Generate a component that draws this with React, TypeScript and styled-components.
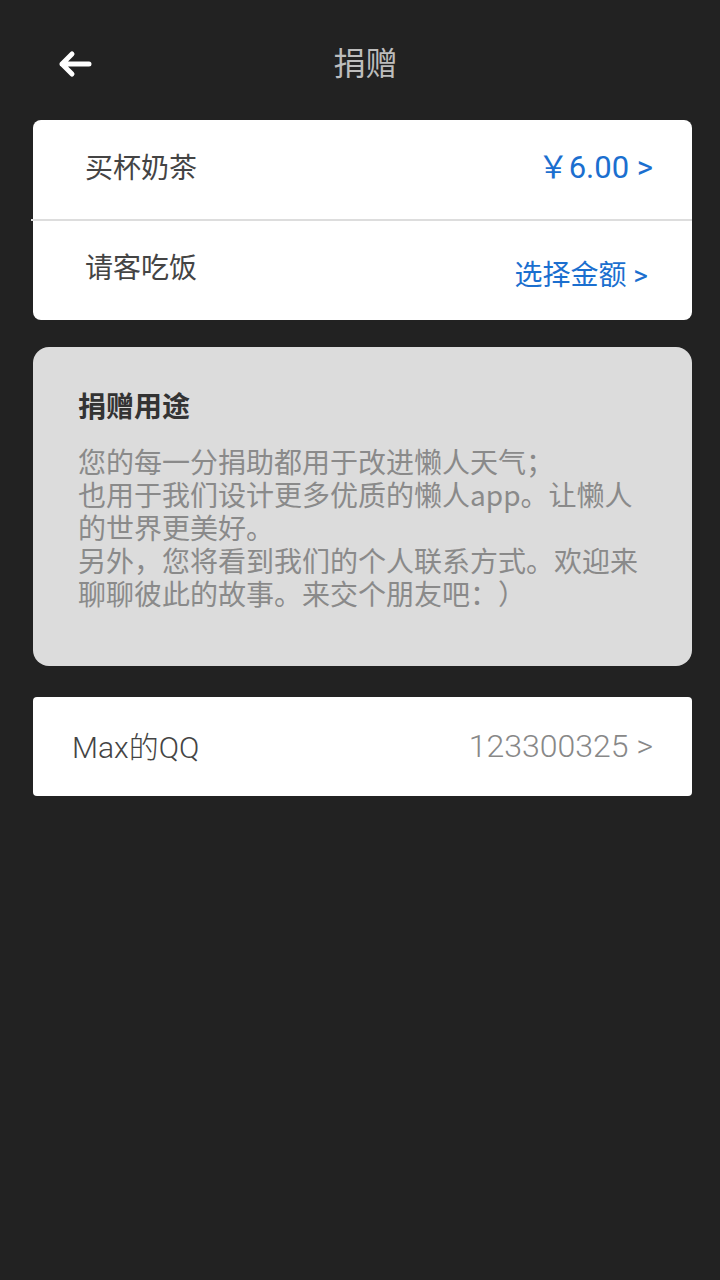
import React from "react";
import styled, { createGlobalStyle } from "styled-components";

const Global = createGlobalStyle`
  html, body { margin: 0; padding: 0; background: #222222; }
  body { font-family: Roboto, "Noto Sans CJK SC", sans-serif; text-spacing-trim: space-all; }
  * { box-sizing: border-box; }
`;

const Page = styled.div`
  width: 720px;
  min-height: 1280px;
  background: #222222;
  display: flex;
  flex-direction: column;
  padding: 0 28px 0 33px;
`;

const Header = styled.div`
  height: 120px;
  display: flex;
  align-items: center;
  position: relative;
  padding-top: 8px;
`;

const BackButton = styled.div`
  width: 40px;
  height: 40px;
  margin-left: 22px;
  display: flex;
  align-items: center;
  justify-content: center;
`;

const Title = styled.div`
  position: absolute;
  left: 0;
  right: 0;
  top: 37px;
  padding-left: 6px;
  text-align: center;
  font-family: "Noto Sans CJK SC", sans-serif;
  font-size: 32px;
  line-height: 48px;
  color: #bdbdbd;
  pointer-events: none;
`;

const Card = styled.div<{ $radius: number }>`
  background: #ffffff;
  border-radius: ${(p) => p.$radius}px;
  display: flex;
  flex-direction: column;
`;

const Row = styled.div<{ $padL: number; $padR: number }>`
  height: 99px;
  display: flex;
  align-items: center;
  justify-content: space-between;
  padding: 0 ${(p) => p.$padR}px 0 ${(p) => p.$padL}px;
`;

const Divider = styled.div`
  height: 2px;
  background: #dddddd;
  margin-left: -2px;
`;

const Label = styled.span<{ $size: number; $shift?: number; $light?: boolean }>`
  font-family: ${(p) => (p.$light ? 'Roboto, "Noto Sans CJK SC", sans-serif' : '"Noto Sans CJK SC", sans-serif')};
  font-weight: ${(p) => (p.$light ? 300 : 400)};
  font-size: ${(p) => p.$size}px;
  color: #444444;
  transform: translateY(${(p) => p.$shift ?? 0}px);
`;

const Value = styled.span<{ $size: number; $color: string; $shift?: number; $light?: boolean }>`
  font-family: Roboto, "Noto Sans CJK SC", sans-serif;
  font-weight: ${(p) => (p.$light ? 300 : 400)};
  font-size: ${(p) => p.$size}px;
  color: ${(p) => p.$color};
  transform: translateY(${(p) => p.$shift ?? 0}px);
  white-space: pre;
`;

const InfoCard = styled.div`
  margin-top: 27px;
  background: #dcdcdc;
  border-radius: 16px;
  padding: 38px 45px 52px 45px;
  display: flex;
  flex-direction: column;
  gap: 20px;
  min-height: 319px;
`;

const InfoTitle = styled.div`
  font-family: "Noto Sans CJK SC", sans-serif;
  font-weight: 700;
  font-size: 28px;
  line-height: 40px;
  color: #333333;
`;

const InfoBody = styled.div`
  font-family: "Noto Sans CJK SC", sans-serif;
  font-size: 28px;
  line-height: 33px;
  color: #8a8a8a;
  white-space: pre-wrap;
  word-break: break-all;
  text-spacing-trim: space-all;
`;

const Spacer = styled.div<{ $h: number }>`
  height: ${(p) => p.$h}px;
`;

const BackArrow = () => (
  <svg width="36" height="30" viewBox="0 0 36 30">
    <path
      d="M5 15 H32 M15 5 L5 15 L15 25"
      fill="none"
      stroke="#ffffff"
      strokeWidth="5"
      strokeLinecap="round"
      strokeLinejoin="round"
    />
  </svg>
);

export default function App() {
  return (
    <>
      <Global />
      <Page>
        <Header>
          <BackButton>
            <BackArrow />
          </BackButton>
          <Title>捐赠</Title>
        </Header>
        <Card $radius={8}>
          <Row $padL={52} $padR={39}>
            <Label $size={28} $shift={-4}>买杯奶茶</Label>
            <Value $size={31} $color="#1b6fcf" $shift={-5}>￥6.00 &gt;</Value>
          </Row>
          <Divider />
          <Row $padL={52} $padR={44}>
            <Label $size={28} $shift={-5}>请客吃饭</Label>
            <Value $size={28} $color="#1b6fcf" $shift={2}>选择金额 &gt;</Value>
          </Row>
        </Card>
        <InfoCard>
          <InfoTitle>捐赠用途</InfoTitle>
          <InfoBody>
            {"您的每一分捐助都用于改进懒人天气；\n也用于我们设计更多优质的懒人app。让懒人的世界更美好。\n另外，您将看到我们的个人联系方式。欢迎来聊聊彼此的故事。来交个朋友吧：）"}
          </InfoBody>
        </InfoCard>
        <Spacer $h={31} />
        <Card $radius={4}>
          <Row $padL={39} $padR={39}>
            <Label $size={30} $light $shift={-2}>Max的QQ</Label>
            <Value $size={32} $light $color="#888888" $shift={-1}>123300325 &gt;</Value>
          </Row>
        </Card>
      </Page>
    </>
  );
}
